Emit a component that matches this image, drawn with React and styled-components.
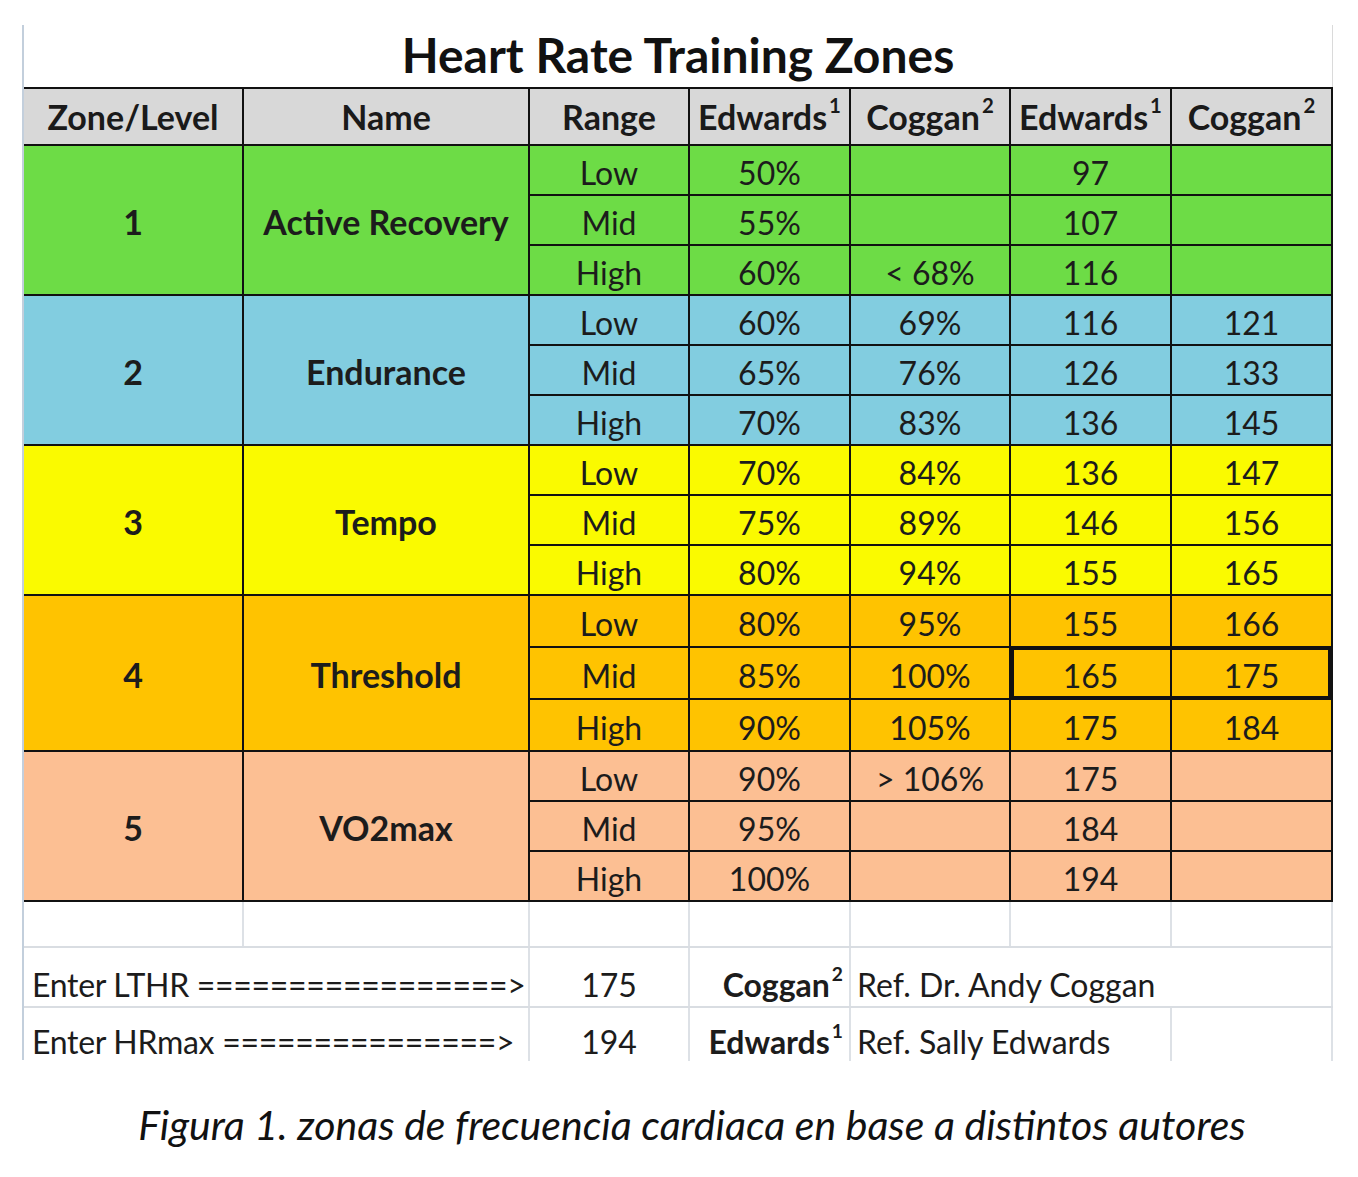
import React from "react";
import styled, { createGlobalStyle } from "styled-components";

const zones = [
  {
    level: "1",
    name: "Active Recovery",
    color: "#6ddc46",
    rows: [
      ["Low", "50%", "", "97", ""],
      ["Mid", "55%", "", "107", ""],
      ["High", "60%", "< 68%", "116", ""],
    ],
  },
  {
    level: "2",
    name: "Endurance",
    color: "#82cde0",
    rows: [
      ["Low", "60%", "69%", "116", "121"],
      ["Mid", "65%", "76%", "126", "133"],
      ["High", "70%", "83%", "136", "145"],
    ],
  },
  {
    level: "3",
    name: "Tempo",
    color: "#fafa00",
    rows: [
      ["Low", "70%", "84%", "136", "147"],
      ["Mid", "75%", "89%", "146", "156"],
      ["High", "80%", "94%", "155", "165"],
    ],
  },
  {
    level: "4",
    name: "Threshold",
    color: "#ffc300",
    rows: [
      ["Low", "80%", "95%", "155", "166"],
      ["Mid", "85%", "100%", "165", "175"],
      ["High", "90%", "105%", "175", "184"],
    ],
  },
  {
    level: "5",
    name: "VO2max",
    color: "#fcbf93",
    rows: [
      ["Low", "90%", "> 106%", "175", ""],
      ["Mid", "95%", "", "184", ""],
      ["High", "100%", "", "194", ""],
    ],
  },
];

const COLS = "218px 284px 158px 159px 158px 159px 159px";

const App = () => {
  return (
    <>
      <GlobalStyle />
      <Page>
        <Sheet>
          <Title>Heart Rate Training Zones</Title>
          <ZoneGrid>
            <HeadCell>Zone/Level</HeadCell>
            <HeadCell>Name</HeadCell>
            <HeadCell>Range</HeadCell>
            <HeadCell>
              Edwards<Sup>1</Sup>
            </HeadCell>
            <HeadCell>
              Coggan<Sup>2</Sup>
            </HeadCell>
            <HeadCell>
              Edwards<Sup>1</Sup>
            </HeadCell>
            <HeadCell>
              Coggan<Sup>2</Sup>
            </HeadCell>
            {zones.map((z) => (
              <React.Fragment key={z.level}>
                <ZoneCell $bg={z.color}>{z.level}</ZoneCell>
                <ZoneCell $bg={z.color}>{z.name}</ZoneCell>
                {z.rows.map((r, i) =>
                  r.map((v, j) => {
                    let sel = "";
                    if (z.level === "4" && i === 1 && j === 3) sel = "left";
                    if (z.level === "4" && i === 1 && j === 4) sel = "right";
                    return (
                      <DataCell key={`${i}-${j}`} $bg={z.color} $sel={sel}>
                        {v}
                      </DataCell>
                    );
                  })
                )}
              </React.Fragment>
            ))}
          </ZoneGrid>

          <PlainRow $h={46}>
            {[0, 1, 2, 3, 4, 5, 6].map((i) => (
              <PlainCell key={i} />
            ))}
          </PlainRow>
          <PlainRow $h={60}>
            <LabelCell $span={2}>Enter LTHR =================&gt;</LabelCell>
            <PlainCell>175</PlainCell>
            <KeyCell>
              Coggan<Sup>2</Sup>
            </KeyCell>
            <RefCell $span={3}>Ref. Dr. Andy Coggan</RefCell>
          </PlainRow>
          <PlainRow $h={52} $last>
            <LabelCell $span={2}>Enter HRmax ===============&gt;</LabelCell>
            <PlainCell>194</PlainCell>
            <KeyCell>
              Edwards<Sup>1</Sup>
            </KeyCell>
            <RefCell $span={2}>Ref. Sally Edwards</RefCell>
            <PlainCell />
          </PlainRow>
        </Sheet>
        <Caption>Figura 1. zonas de frecuencia cardiaca en base a distintos autores</Caption>
      </Page>
    </>
  );
};

export default App;

const GlobalStyle = createGlobalStyle`
  body {
    margin: 0;
    background: #ffffff;
    font-family: Lato, "Open Sans", sans-serif;
    color: #1c1c1c;
  }
`;

const Page = styled.div`
  width: 1358px;
  height: 1177px;
  padding-top: 25px;
  box-sizing: border-box;
  overflow: hidden;
`;

const Sheet = styled.div`
  margin-left: 22px;
  width: 1311px;
  border-left: 2px solid #c3cfdc;
  box-sizing: border-box;
`;

const Title = styled.div`
  height: 62px;
  display: flex;
  align-items: center;
  justify-content: center;
  font-size: 48px;
  font-weight: 700;
  color: #111;
  border-right: 1px solid #dadada;
  padding-bottom: 4px;
  box-sizing: border-box;
`;

const ZoneGrid = styled.div`
  display: grid;
  grid-template-columns: ${COLS};
  grid-template-rows: 55px repeat(9, 48px) repeat(3, 50px) repeat(3, 48px);
  gap: 2px;
  background: #111;
  padding: 2px 2px 2px 0;
`;

const Cell = styled.div`
  display: flex;
  align-items: center;
  justify-content: center;
  font-size: 32px;
  white-space: nowrap;
`;

const HeadCell = styled(Cell)`
  background: #d8d8d8;
  font-weight: 700;
  font-size: 34px;
  color: #1a1a1a;
`;

const ZoneCell = styled(Cell)`
  grid-row: span 3;
  background: ${(p) => p.$bg};
  font-weight: 700;
  font-size: 34px;
  padding-top: 2px;
`;

const DataCell = styled(Cell)`
  background: ${(p) => p.$bg};
  padding-top: 4px;
  box-sizing: border-box;
  box-shadow: ${(p) =>
    p.$sel === "left"
      ? "inset 3px 2px 0 #111, inset 0 -2px 0 #111"
      : p.$sel === "right"
      ? "inset -3px 2px 0 #111, inset 0 -2px 0 #111"
      : "none"};
`;

const Sup = styled.sup`
  font-size: 0.6em;
  vertical-align: 0;
  position: relative;
  top: -0.55em;
  margin-left: 2px;
`;

const PlainRow = styled.div`
  display: grid;
  grid-template-columns: ${COLS};
  column-gap: 2px;
  height: ${(p) => p.$h}px;
  border-bottom: ${(p) => (p.$last ? "none" : "2px solid #d9dde2")};
  padding-right: 2px;
  box-sizing: border-box;
`;

const PlainCell = styled(Cell)`
  border-right: 2px solid #dde1e6;
  margin-right: -2px;
  padding-top: 14px;
  box-sizing: border-box;
  grid-column: span ${(p) => p.$span || 1};
`;

const LabelCell = styled(PlainCell)`
  justify-content: flex-start;
  padding-left: 8px;
  letter-spacing: -0.3px;
`;

const KeyCell = styled(PlainCell)`
  justify-content: flex-end;
  padding-right: 6px;
  font-weight: 700;
`;

const RefCell = styled(PlainCell)`
  justify-content: flex-start;
  padding-left: 6px;
`;

const Caption = styled.div`
  margin-top: 40px;
  padding-left: 26px;
  text-align: center;
  font-size: 41px;
  font-style: italic;
  color: #111;
`;
